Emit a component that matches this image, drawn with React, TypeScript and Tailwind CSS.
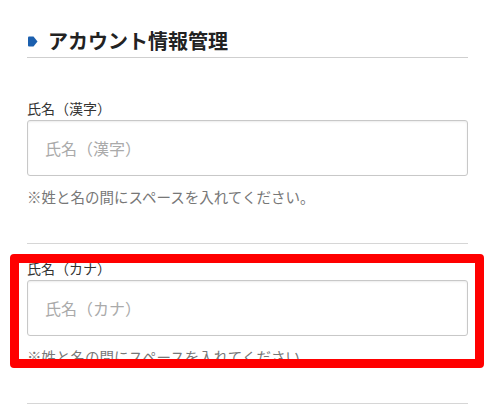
import React from 'react';

const font = { fontFamily: '"Noto Sans CJK JP", "Noto Sans", sans-serif' };

function Field({ label, placeholder, first }: { label: string; placeholder: string; first?: boolean }) {
  return (
    <div className={first ? 'pt-[40px]' : 'pt-[14px]'}>
      <label className="block text-[14px] leading-[20px] text-[#333]">{label}</label>
      <input
        type="text"
        placeholder={placeholder}
        className="mt-[2px] block h-[56px] w-full rounded-[3px] border border-[#c8c8c8] bg-white px-[17px] text-[16px] text-[#333] shadow-[inset_0_1px_2px_rgba(0,0,0,0.08)] outline-none placeholder:text-[#aaa]"
        style={font}
      />
      <p className="mt-[11px] text-[14.5px] leading-[20px] text-[#777]">※姓と名の間にスペースを入れてください。</p>
      <div className="mt-[36px] border-b border-[#d6d6d6]" />
    </div>
  );
}

export default function App() {
  return (
    <div className="relative min-h-[407px] w-[497px] bg-white" style={font}>
      <div className="pl-[27px] pr-[29px] pt-[27px]">
        <div className="flex items-center gap-[10px] border-b border-[#cfcfcf] pb-[2px]">
          <svg width="11" height="11" viewBox="0 0 11 11" className="shrink-0">
            <path d="M1 1.5 Q1 0.5 2 0.5 H6.5 L10.5 5.5 L6.5 10.5 H2 Q1 10.5 1 9.5 Z" fill="#1b5fae" />
          </svg>
          <h2 className="text-[20px] font-bold leading-[28px] text-[#222]">アカウント情報管理</h2>
        </div>
        <Field first label="氏名（漢字）" placeholder="氏名（漢字）" />
        <Field label="氏名（カナ）" placeholder="氏名（カナ）" />
      </div>
      {/* annotation highlight */}
      <div className="pointer-events-none absolute left-[10px] top-[254px] h-[114px] w-[474px] rounded-[4px] border-[9px] border-[#ff0000]" />
    </div>
  );
}
